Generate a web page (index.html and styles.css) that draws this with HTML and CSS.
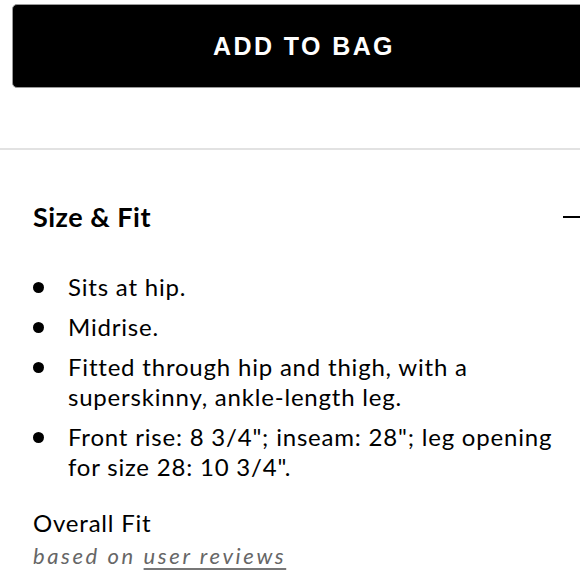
FILE: index.html
```html
<!DOCTYPE html>
<html>
<head>
<meta charset="utf-8">
<link rel="stylesheet" href="styles.css">
</head>
<body>
<div class="page">
  <div class="cta">
    <button class="bag-btn">ADD TO BAG</button>
  </div>
  <hr class="divider">
  <section class="panel">
    <div class="panel-head">
      <h2 class="panel-title">Size &amp; Fit</h2>
      <span class="collapse"></span>
    </div>
    <ul class="facts">
      <li>Sits at hip.</li>
      <li>Midrise.</li>
      <li>Fitted through hip and thigh, with a superskinny, ankle-length leg.</li>
      <li>Front rise: 8 3/4"; inseam: 28"; leg opening for size 28: 10 3/4".</li>
    </ul>
    <div class="fit">
      <div class="fit-title">Overall Fit</div>
      <div class="fit-sub">based on <a class="fit-link">user reviews</a></div>
    </div>
  </section>
</div>
</body>
</html>
```
FILE: styles.css
```css
html, body {
  margin: 0;
  padding: 0;
  background: #fff;
}
.page {
  width: 580px;
  height: 580px;
  overflow: hidden;
  font-family: Lato, "Open Sans", sans-serif;
  color: #000;
}
.cta {
  padding: 4px 0 0 12px;
}
.bag-btn {
  display: block;
  width: 584px;
  height: 84px;
  background: #000;
  color: #fff;
  border: 1px solid #9a9a9a;
  border-radius: 5px;
  font-family: "Liberation Sans", Arial, sans-serif;
  font-weight: 700;
  font-size: 25px;
  letter-spacing: 2.4px;
  padding: 0;
}
.divider {
  margin: 60px 0 0 0;
  border: 0;
  height: 2px;
  background: #e2e2e2;
}
.panel {
  padding: 0 0 0 33px;
}
.panel-head {
  display: flex;
  justify-content: space-between;
  align-items: center;
  padding-top: 51px;
}
.panel-title {
  margin: 0;
  font-size: 27px;
  line-height: 32px;
  letter-spacing: 0.5px;
  font-weight: 700;
}
.collapse {
  width: 17px;
  height: 2px;
  background: #000;
}
.facts {
  list-style: none;
  margin: 39px 0 0 0;
  padding: 0;
  display: flex;
  flex-direction: column;
  gap: 10px;
}
.facts li {
  position: relative;
  padding-left: 35px;
  font-size: 24px;
  letter-spacing: 0.8px;
  line-height: 30px;
  padding-right: 10px;
}
.facts li::before {
  content: "";
  position: absolute;
  left: 0;
  top: 10px;
  width: 11px;
  height: 11px;
  border-radius: 50%;
  background: #000;
}
.fit {
  margin-top: 26px;
}
.fit-title {
  font-size: 24px;
  letter-spacing: 0.8px;
  line-height: 30px;
}
.fit-sub {
  font-size: 22px;
  line-height: 30px;
  font-style: italic;
  color: #666;
  letter-spacing: 2.6px;
  margin-top: 3px;
}
.fit-link {
  text-decoration: underline;
  text-decoration-color: #777;
  text-underline-offset: 4px;
}
```
